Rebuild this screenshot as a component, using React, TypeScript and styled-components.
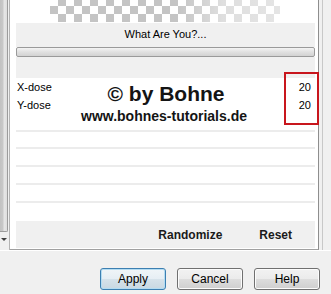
import React from "react";
import styled, { createGlobalStyle } from "styled-components";

const GlobalStyle = createGlobalStyle`
  html, body {
    margin: 0;
    padding: 0;
    background: #f0f0f0;
  }
  body {
    font-family: "Liberation Sans", Arial, sans-serif;
    color: #000;
  }
`;

const Window = styled.div`
  position: relative;
  width: 331px;
  height: 294px;
  overflow: hidden;
  display: grid;
  grid-template-columns: 10px 309px 12px;
  grid-template-rows: 250px 44px;
  background: #f0f0f0;
`;

const Gutter = styled.div`
  display: flex;
  flex-direction: column;
  align-items: flex-start;
  border-right: 1px solid #b4b4b4;
  box-sizing: border-box;
`;

const Thumb = styled.div`
  width: 8px;
  height: 232px;
  box-sizing: border-box;
  background: linear-gradient(to right, #c2c2c2 0%, #c8c8c8 40%, #e6e6e6 60%, #dedede 100%);
  border-right: 1px solid #9c9c9c;
  border-bottom: 1px solid #9c9c9c;
  border-bottom-right-radius: 2px;
`;

const Arrow = styled.div`
  margin-top: 6px;
  margin-left: 1px;
  width: 0;
  height: 0;
  border-left: 3px solid transparent;
  border-right: 3px solid transparent;
  border-top: 3px solid #404040;
`;

const Frame = styled.div`
  position: relative;
  background: #fff;
  box-sizing: border-box;
  padding: 0 3px 0 6px;
  border-right: 1px solid #8e8e8e;
  border-bottom: 1px solid #a0a0a0;
  display: flex;
  flex-direction: column;
`;

const RightEdge = styled.div`
  box-sizing: border-box;
  margin-left: 3px;
  border-left: 1px solid #c8c8c8;
`;

const Preview = styled.div`
  height: 23px;
  padding-left: 34px;
  box-sizing: border-box;
`;

const Checker = styled.div`
  position: relative;
  width: 230px;
  height: 22px;
  background-color: #fff;
  background-image: conic-gradient(#c4c4c4 25%, #fff 0 50%, #c4c4c4 0 75%, #fff 0);
  background-size: 16px 16px;
  background-position: 0 -2px;
  &::after {
    content: "";
    position: absolute;
    inset: 0;
    background: linear-gradient(
      to right,
      rgba(255, 255, 255, 0) 0%,
      rgba(255, 255, 255, 0) 55%,
      rgba(255, 255, 255, 0.45) 75%,
      rgba(255, 255, 255, 0.55) 100%
    );
  }
`;

const Band = styled.div`
  height: 22px;
  background: #f0f0f0;
  display: flex;
  align-items: center;
  justify-content: center;
  font-size: 11px;
  color: #000;
`;

const Gap = styled.div<{ $h: number }>`
  height: ${(p) => p.$h}px;
  background: #f0f0f0;
`;

const Track = styled.div`
  height: 10px;
  box-sizing: border-box;
  border: 1px solid #9a9a9a;
  border-radius: 2px;
  background: linear-gradient(to bottom, #f4f4f4 0%, #e2e2e2 45%, #d2d2d2 100%);
`;

const List = styled.div`
  height: 143px;
  display: flex;
  flex-direction: column;
  background: #fff;
`;

const Row = styled.div<{ $line?: boolean }>`
  height: 18px;
  box-sizing: border-box;
  display: flex;
  align-items: center;
  justify-content: space-between;
  padding: 0 4px 0 1px;
  font-size: 11px;
  border-bottom: ${(p) => (p.$line ? "2px solid #ececec" : "none")};
`;

const Footer = styled.div`
  height: 27px;
  margin-bottom: 1px;
  background: #f0f0f0;
  display: flex;
  align-items: center;
  justify-content: flex-end;
  gap: 37px;
  padding-right: 23px;
`;

const BoldAction = styled.span`
  font-size: 12px;
  font-weight: bold;
  color: #1a1a1a;
`;

const Watermark = styled.div`
  position: absolute;
  left: 0;
  right: 0;
  top: 83px;
  display: flex;
  flex-direction: column;
  align-items: center;
  font-weight: bold;
  color: #141414;
  pointer-events: none;
`;

const Mark = styled.div`
  font-size: 21px;
  line-height: 22px;
  padding-left: 4px;
`;

const Site = styled.div`
  font-size: 14px;
  line-height: 16px;
  margin-top: 3px;
`;

const RedBox = styled.div`
  position: absolute;
  left: 284px;
  top: 72px;
  width: 35px;
  height: 53px;
  box-sizing: border-box;
  border: 2px solid #c8161d;
`;

const ButtonBar = styled.div`
  grid-column: 1 / 4;
  display: flex;
  justify-content: flex-end;
  align-items: flex-start;
  gap: 11px;
  padding: 17px 11px 0 0;
  box-sizing: border-box;
  border-top: 1px solid #fff;
`;

const Button = styled.button<{ $default?: boolean }>`
  width: 66px;
  height: 22px;
  padding: 0;
  box-sizing: border-box;
  font-family: "Liberation Sans", Arial, sans-serif;
  font-size: 12px;
  color: #000;
  border-radius: 3px;
  border: 1px solid ${(p) => (p.$default ? "#3c7fb1" : "#707070")};
  background: ${(p) =>
    p.$default
      ? "linear-gradient(to bottom, #f0f5f8 0%, #e6eef4 50%, #d6e2ea 51%, #c9d8e2 100%)"
      : "linear-gradient(to bottom, #f2f2f2 0%, #ebebeb 50%, #dddddd 51%, #cfcfcf 100%)"};
  box-shadow: inset 0 0 0 1px ${(p) => (p.$default ? "#b4dcf2" : "#fcfcfc")};
`;

const rows = [
  { label: "X-dose", value: "20" },
  { label: "Y-dose", value: "20" },
  { label: "", value: "", line: true },
  { label: "", value: "", line: true },
  { label: "", value: "", line: true },
  { label: "", value: "", line: true },
  { label: "", value: "", line: true },
  { label: "", value: "" },
];

export default function App() {
  return (
    <>
      <GlobalStyle />
      <Window>
        <Gutter>
          <Thumb />
          <Arrow />
        </Gutter>
        <Frame>
          <Preview>
            <Checker />
          </Preview>
          <Band>What Are You?...</Band>
          <Gap $h={2} />
          <Track />
          <Gap $h={21} />
          <List>
            {rows.map((r, i) => (
              <Row key={i} $line={r.line}>
                <span>{r.label}</span>
                <span>{r.value}</span>
              </Row>
            ))}
          </List>
          <Footer>
            <BoldAction>Randomize</BoldAction>
            <BoldAction>Reset</BoldAction>
          </Footer>
          <Watermark>
            <Mark>© by Bohne</Mark>
            <Site>www.bohnes-tutorials.de</Site>
          </Watermark>
        </Frame>
        <RightEdge />
        <ButtonBar>
          <Button $default>Apply</Button>
          <Button>Cancel</Button>
          <Button>Help</Button>
        </ButtonBar>
        <RedBox />
      </Window>
    </>
  );
}
